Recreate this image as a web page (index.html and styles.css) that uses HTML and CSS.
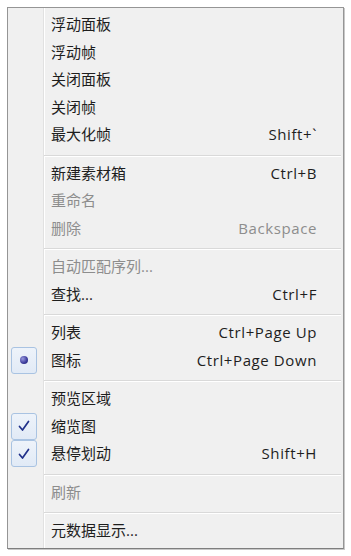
FILE: index.html
```html
<!DOCTYPE html>
<html lang="zh-CN">
<head>
<meta charset="utf-8">
<title>菜单</title>
<link rel="stylesheet" href="styles.css">
</head>
<body>
<div class="menu">
  <div class="item"><span class="gutter"></span><span class="label">浮动面板</span><span class="key"></span></div>
  <div class="item"><span class="gutter"></span><span class="label">浮动帧</span><span class="key"></span></div>
  <div class="item"><span class="gutter"></span><span class="label">关闭面板</span><span class="key"></span></div>
  <div class="item"><span class="gutter"></span><span class="label">关闭帧</span><span class="key"></span></div>
  <div class="item"><span class="gutter"></span><span class="label">最大化帧</span><span class="key">Shift+`</span></div>
  <div class="sep"></div>
  <div class="item"><span class="gutter"></span><span class="label">新建素材箱</span><span class="key">Ctrl+B</span></div>
  <div class="item disabled"><span class="gutter"></span><span class="label">重命名</span><span class="key"></span></div>
  <div class="item disabled"><span class="gutter"></span><span class="label">删除</span><span class="key">Backspace</span></div>
  <div class="sep"></div>
  <div class="item disabled"><span class="gutter"></span><span class="label">自动匹配序列...</span><span class="key"></span></div>
  <div class="item"><span class="gutter"></span><span class="label">查找...</span><span class="key">Ctrl+F</span></div>
  <div class="sep"></div>
  <div class="item"><span class="gutter"></span><span class="label">列表</span><span class="key">Ctrl+Page Up</span></div>
  <div class="item"><span class="gutter"><span class="mark"><span class="dot"></span></span></span><span class="label">图标</span><span class="key">Ctrl+Page Down</span></div>
  <div class="sep"></div>
  <div class="item"><span class="gutter"></span><span class="label">预览区域</span><span class="key"></span></div>
  <div class="item"><span class="gutter"><span class="mark"><svg class="check" viewBox="0 0 12 12" width="12" height="12"><path d="M1.5 6.5 L4.5 10 L10.5 1.5" fill="none" stroke="#20308a" stroke-width="1.7" stroke-linejoin="round" stroke-linecap="round"/></svg></span></span><span class="label">缩览图</span><span class="key"></span></div>
  <div class="item"><span class="gutter"><span class="mark"><svg class="check" viewBox="0 0 12 12" width="12" height="12"><path d="M1.5 6.5 L4.5 10 L10.5 1.5" fill="none" stroke="#20308a" stroke-width="1.7" stroke-linejoin="round" stroke-linecap="round"/></svg></span></span><span class="label">悬停划动</span><span class="key">Shift+H</span></div>
  <div class="sep"></div>
  <div class="item disabled"><span class="gutter"></span><span class="label">刷新</span><span class="key"></span></div>
  <div class="sep"></div>
  <div class="item"><span class="gutter"></span><span class="label">元数据显示...</span><span class="key"></span></div>
</div>
</body>
</html>
```
FILE: styles.css
```css
html, body {
  margin: 0;
  padding: 0;
  background: #ffffff;
}
body {
  padding: 7px;
  font-family: "Open Sans", "Noto Sans CJK SC", sans-serif;
  font-size: 15px;
  color: #1e1e1e;
}
.menu {
  width: 335px;
  border: 1px solid #959595;
  border-bottom-color: #7e7e7e;
  box-shadow: 1px 1px 0 #c8c8c8;
  background-color: #f0f0f0;
  background-image: linear-gradient(to right, transparent 35px, #e1e1e1 35px, #e1e1e1 36px, #ffffff 36px, #ffffff 37px, transparent 37px);
  padding: 3px 0 3px 0;
  display: flex;
  flex-direction: column;
}
.item {
  display: grid;
  grid-template-columns: 35px 1fr auto;
  align-items: center;
  height: 27.5px;
  padding-right: 26px;
}
.gutter {
  display: flex;
  align-items: center;
  justify-content: flex-start;
  padding-left: 3px;
  height: 100%;
}
.mark {
  width: 24px;
  height: 25px;
  border: 1px solid #a9c3e2;
  border-radius: 3px;
  background: linear-gradient(#eef3fa, #e1eaf6);
  display: flex;
  align-items: center;
  justify-content: center;
}
.dot {
  width: 8px;
  height: 8px;
  border-radius: 50%;
  background: radial-gradient(circle at 35% 35%, #9a9ae0, #3a3a9a 60%, #23236e);
}
.check {
  display: block;
}
.label {
  padding-left: 8px;
  white-space: nowrap;
  line-height: 27.5px;
}
.key {
  white-space: nowrap;
  text-align: right;
  line-height: 27.5px;
  letter-spacing: 0.6px;
}
.disabled {
  color: #8d8d8d;
}
.sep {
  height: 11px;
  margin-left: 36px;
  margin-right: 2px;
  box-sizing: border-box;
  padding-top: 6px;
  background-image: linear-gradient(to bottom, transparent 6px, #d9d9d9 6px, #d9d9d9 7px, #ffffff 7px, #ffffff 8px, transparent 8px);
}
```
